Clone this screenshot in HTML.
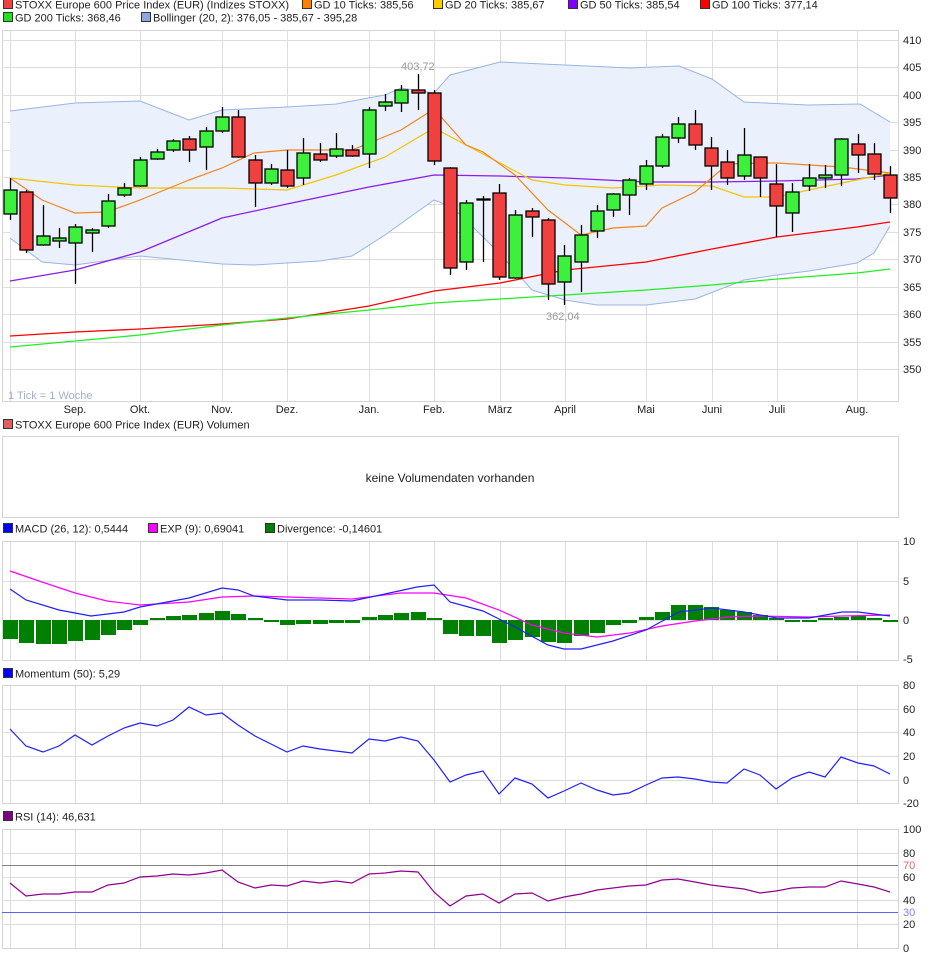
<!DOCTYPE html>
<html><head><meta charset="utf-8"><style>
body{margin:0;background:#fff;width:940px;height:958px;overflow:hidden;font-family:"Liberation Sans",sans-serif}
svg{position:absolute;left:0;top:0}
text{font-family:"Liberation Sans",sans-serif;font-size:11px;fill:#222}
</style></head><body>
<svg id="s" width="940" height="958" xmlns="http://www.w3.org/2000/svg"></svg>
<script>
var o=[];
function a(s){o.push(s)}
function leg(x,y,c,t){a('<rect x="'+(x+0.5)+'" y="'+(y-7.5)+'" width="9" height="9" fill="'+c+'" stroke="#333" stroke-width="1"/><text x="'+(x+12)+'" y="'+(y+1.5)+'">'+t+'</text>')}
var vx=[10,75,140,222,287,369,434,500,565,646,712,777,857];
function panel(t,b,hs){
 a('<rect x="2.5" y="'+(t+.5)+'" width="896" height="'+(b-t)+'" fill="#fff" stroke="#d4d4d4"/>');
 vx.forEach(function(x){a('<line x1="'+(x+.5)+'" y1="'+t+'" x2="'+(x+.5)+'" y2="'+b+'" stroke="#ddd"/>')});
 hs.forEach(function(y){a('<line x1="2" y1="'+(y+.5)+'" x2="898" y2="'+(y+.5)+'" stroke="#ddd"/>')});
}
function pl(pts,c,w){var s='';for(var i=0;i<pts.length;i+=2)s+=pts[i]+','+pts[i+1]+' ';a('<polyline points="'+s+'" fill="none" stroke="'+c+'" stroke-width="'+(w||1.2)+'"/>')}
function lab(x,y,t,c){a('<text x="'+x+'" y="'+(y+4)+'"'+(c?' style="fill:'+c+'"':'')+'>'+t+'</text>')}
leg(3,7,'#f04040','STOXX Europe 600 Price Index (EUR) (Indizes STOXX)');
leg(302,7,'#ff8000','GD 10 Ticks: 385,56');
leg(433,7,'#ffcc00','GD 20 Ticks: 385,67');
leg(568,7,'#8000ff','GD 50 Ticks: 385,54');
leg(700,7,'#ff0000','GD 100 Ticks: 377,14');
leg(3,20,'#20e020','GD 200 Ticks: 368,46');
leg(141,20,'#8aa8dc','Bollinger (20, 2): 376,05 - 385,67 - 395,28');
var mh=[];for(var p=410;p>=350;p-=5)mh.push(Math.round(40+(410-p)*5.483));
panel(30,401,mh);
mh.forEach(function(y,i){lab(903,y,String(410-5*i))});
var up=[10,111,75,103,140,101,189,120,222,110,287,107,336,104,385,95,401,88,434,93,450,75,500,62,565,65,630,68,679,66,712,79,744,102,808,105,860,104,890,122];
var lo=[10,238,42,262,75,265,140,256,222,264,254,265,320,261,352,256,385,235,417,212,434,200,450,206,466,220,500,254,532,290,565,300,597,305,646,305,695,299,744,280,777,275,809,271,857,263,874,253,890,226];
var d='M';for(var i=0;i<up.length;i+=2)d+=up[i]+','+up[i+1]+' L';
for(var i=lo.length-2;i>=0;i-=2)d+=lo[i]+','+lo[i+1]+' ';
a('<path d="'+d.replace(/ L$/,'')+'Z" fill="#eaf0fc"/>');
pl(up,'#9ab4e4',1);pl(lo,'#9ab4e4',1);
pl([10,336,75,332,140,329,222,324,287,319,369,306,434,291,500,283,565,270,646,262,712,249,777,237,857,227,890,222],'#ff0000',1.3);
pl([10,347,75,341,140,335,222,325,287,318,369,310,434,303,500,299,565,295,646,290,712,285,777,279,857,273,890,269],'#22ee22',1.3);
pl([10,281,75,270,140,252,222,218,287,204,369,187,434,175,500,176,565,178,646,182,712,182,777,181,857,179,890,175],'#8a1ee8',1.3);
pl([10,178,75,185,140,188,222,188,287,190,336,175,385,157,434,128,483,154,532,180,565,185,613,188,662,185,712,186,744,197,777,197,809,190,842,183,890,173],'#f5c400',1.2);
pl([10,178,42,200,75,213,107,212,140,200,189,180,222,168,254,153,287,150,320,150,352,150,401,130,434,109,466,145,483,152,515,175,548,210,581,235,613,228,646,226,662,208,695,192,728,164,760,163,777,163,842,167,890,173],'#f5841e',1.2);
var C=[['g',190,214,178,220],['r',192,250,190,253],['g',236,245,205,246],['g',238,241,228,248],['g',227,243,224,284],['g',230,233,228,252],['g',201,226,194,228],['g',188,195,183,197],['g',160,186,157,187],['g',152,159,149,160],['g',141,150,139,152],['r',139,150,136,162],['g',131,147,127,170],['g',117,131,107,133],['r',117,157,110,158],['r',160,183,155,207],['g',169,183,164,185],['r',170,186,150,188],['g',153,178,138,185],['r',154,160,143,162],['g',149,156,133,158],['r',150,156,145,157],['g',110,154,107,168],['g',102,106,94,111],['g',90,103,85,112],['r',90,93,74,110],['r',93,161,90,165],['r',168,268,167,275],['g',203,262,200,270],['k',199,200,196,262],['r',193,277,184,280],['g',215,278,210,279],['r',211,217,208,237],['r',220,284,218,300],['g',256,282,245,305],['g',235,262,225,292],['g',211,231,205,238],['g',194,210,193,217],['g',180,195,178,215],['g',166,184,160,190],['g',137,166,134,168],['g',124,138,117,143],['r',124,145,110,150],['r',148,166,137,190],['r',162,178,150,185],['g',155,176,128,180],['r',157,178,157,197],['r',184,206,164,237],['g',192,213,183,232],['g',178,186,164,191],['g',175,178,165,188],['g',139,175,138,186],['r',144,155,134,173],['r',154,174,143,180],['r',175,198,166,213]];
var X=[];for(var i=0;i<55;i++)X.push(Math.round(10+i*16.3));
C.forEach(function(c,i){var x=X[i];
 a('<line x1="'+(x+.5)+'" y1="'+c[3]+'" x2="'+(x+.5)+'" y2="'+c[4]+'" stroke="#000" stroke-width="1.3"/>');
 var f=c[0]=='g'?'#3cf03c':c[0]=='r'?'#f04040':'#000';
 a('<rect x="'+(x-6)+'" y="'+c[1]+'" width="13" height="'+Math.max(1,c[2]-c[1])+'" fill="'+f+'" stroke="#000" stroke-width="1.3"/>');});
a('<text x="401" y="70" style="fill:#999">403,72</text>');
a('<text x="546" y="320" style="fill:#999">362,04</text>');
a('<text x="8" y="399" style="fill:#a0b0d0">1 Tick = 1 Woche</text>');
var ml=[['Sep.',75],['Okt.',140],['Nov.',222],['Dez.',287],['Jan.',369],['Feb.',434],['März',500],['April',565],['Mai',646],['Juni',712],['Juli',777],['Aug.',857]];
ml.forEach(function(m){a('<text x="'+m[1]+'" y="413" text-anchor="middle">'+m[0]+'</text>')});
leg(3,427,'#e06060','STOXX Europe 600 Price Index (EUR) Volumen');
a('<rect x="2.5" y="436.5" width="896" height="81" fill="#fff" stroke="#d4d4d4"/>');
a('<text x="450" y="482" text-anchor="middle" style="font-size:12px">keine Volumendaten vorhanden</text>');
leg(3,531,'#0000ff','MACD (26, 12): 0,5444');
leg(148,531,'#ff00ff','EXP (9): 0,69041');
leg(265,531,'#008000','Divergence: -0,14601');
panel(541,660,[581,620]);
lab(903,541,'10');lab(903,581,'5');lab(903,620,'0');lab(903,659,'-5');
var dv=[19,23,24,24,21,20,15,10,5,-1,-4,-5,-7,-9,-6,-1,2,5,4,4,3,3,-3,-5,-7,-8,-1,14,16,16,23,20,17,22,23,16,13,5,3,-3,-8,-15,-15,-13,-10,-8,-5,-2,1,1,-2,-3,-4,-2,1];
dv.forEach(function(v,i){var x=X[i];var h=Math.abs(v);if(h<2)h=2;var y=v>0?620:620-h;a('<rect x="'+(x-7)+'" y="'+y+'" width="15" height="'+h+'" fill="#008000"/>')});
pl([10,571,42,582,75,593,107,601,140,605,189,602,222,597,254,596,287,597,352,599,401,593,434,593,466,598,499,610,532,625,564,633,597,637,630,633,662,626,695,621,728,617,760,616,809,617,842,616,890,615],'#ff00ff',1.2);
pl([10,589,26,600,59,610,91,616,124,612,140,607,189,598,222,588,238,590,254,596,287,600,320,600,352,601,385,594,417,587,434,585,450,602,483,611,515,627,548,645,564,649,581,649,613,641,646,630,679,612,712,608,744,612,777,618,809,618,842,612,858,612,890,616],'#2020ff',1.2);
leg(3,676,'#0000ff','Momentum (50): 5,29');
panel(685,803,[709,732,756,780]);
[['80',685],['60',709],['40',732],['20',756],['0',780],['-20',803]].forEach(function(l){lab(903,l[1],l[0])});
var mo=[729,746,752,746,735,745,736,728,723,726,720,707,715,713,725,736,744,752,746,749,751,753,739,741,737,741,760,782,775,771,794,778,784,798,791,783,790,795,793,785,778,777,779,782,783,769,775,789,778,772,777,757,763,766,774];
var mp=[];mo.forEach(function(y,i){mp.push(X[i],y)});pl(mp,'#2020ff',1.2);
leg(3,819,'#800080','RSI (14): 46,631');
panel(829,948,[853,877,900,924]);
a('<line x1="2" y1="865.5" x2="898" y2="865.5" stroke="#808080"/>');
a('<line x1="2" y1="912.5" x2="898" y2="912.5" stroke="#6060ff"/>');
[['100',829],['80',853],['60',877],['40',900],['20',924],['0',948]].forEach(function(l){lab(903,l[1],l[0])});
lab(903,865,'70','#f06060');lab(903,912,'30','#8080ff');
var rs=[883,896,894,894,892,892,885,883,877,876,874,875,873,870,882,888,885,886,881,883,881,883,874,873,871,872,892,906,896,894,903,894,893,901,897,894,890,888,886,885,880,879,882,885,887,889,893,891,888,887,887,881,884,887,892];
var rp=[];rs.forEach(function(y,i){rp.push(X[i],y)});pl(rp,'#900090',1.2);
document.getElementById('s').innerHTML=o.join('');
</script>
</body></html>
